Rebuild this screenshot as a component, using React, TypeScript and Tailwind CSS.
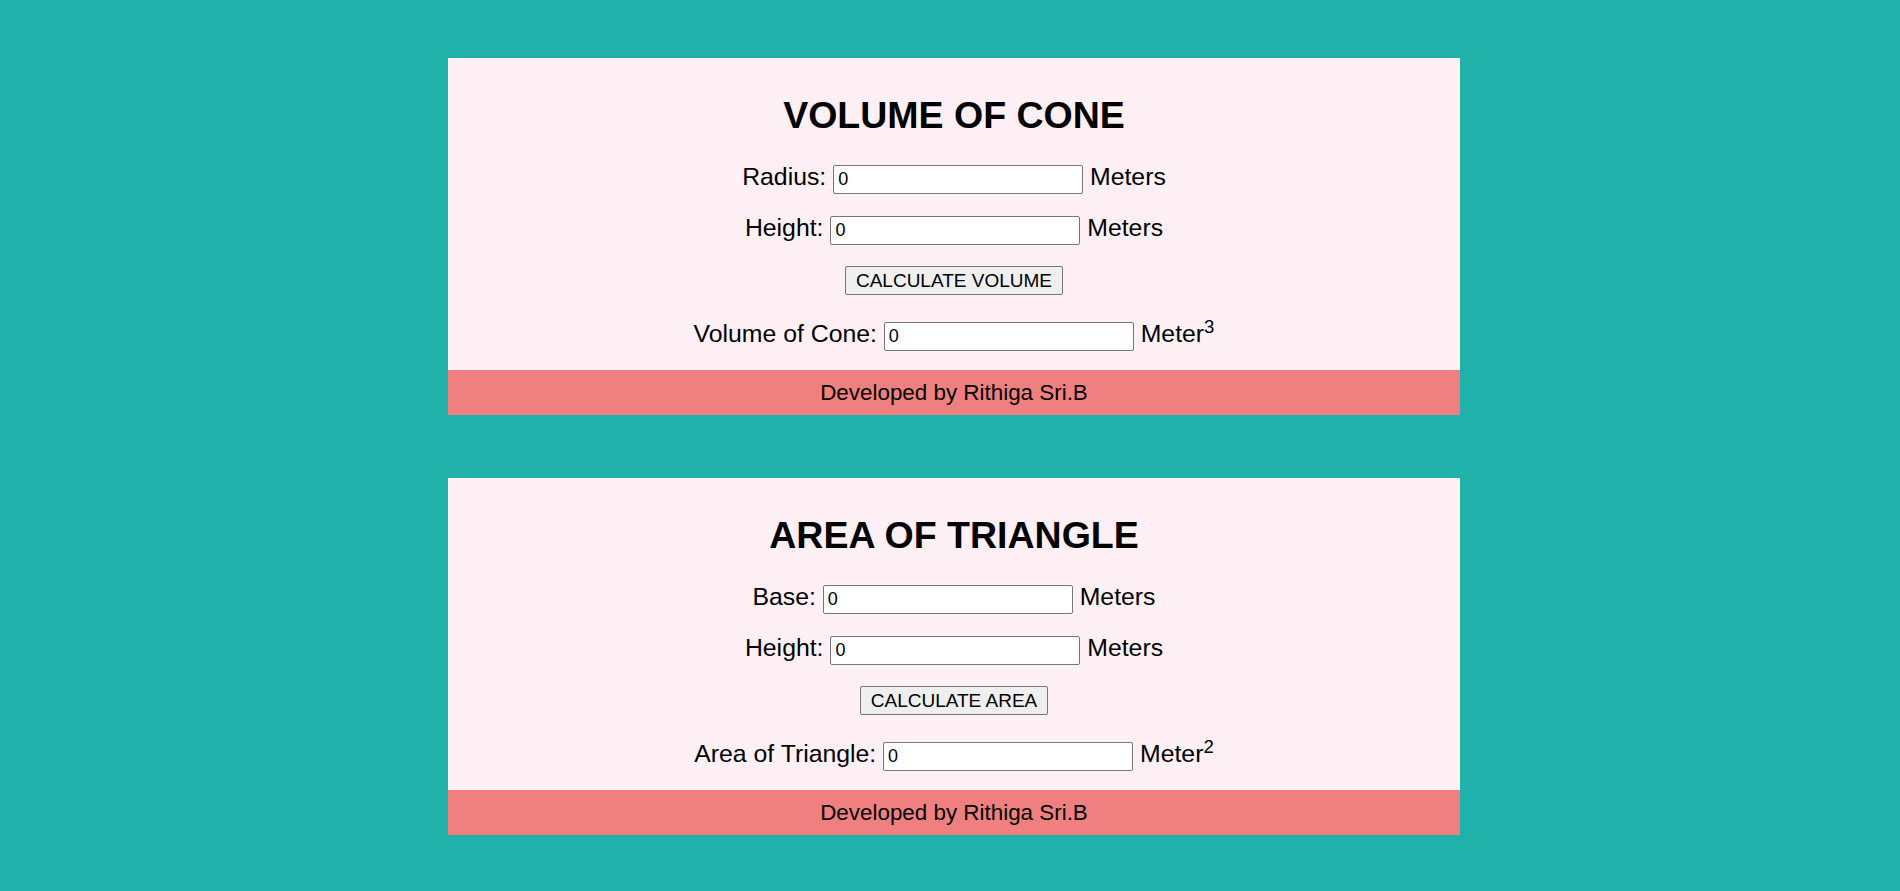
import React from "react";

const font = { fontFamily: '"Liberation Sans", Arial, sans-serif' };

function Row({ label, unit, sup }: { label: string; unit: string; sup?: string }) {
  return (
    <div className="flex items-baseline justify-center gap-[6.9px] text-[24.8px] leading-[20px] text-black">
      <span>{label}</span>
      <input
        type="text"
        defaultValue="0"
        className="h-[29px] w-[250px] rounded-[2px] border border-[#767676] bg-white pl-[4px] text-[18px] leading-[21px] text-black outline-none"
      />
      <span>
        {unit}
        {sup ? <sup>{sup}</sup> : null}
      </span>
    </div>
  );
}

function Card({
  title,
  rows,
  button,
  result,
  sup,
}: {
  title: string;
  rows: string[];
  button: string;
  result: string;
  sup: string;
}) {
  return (
    <div className="w-[1012px] bg-[#fff0f5]" style={font}>
      <div className="flex flex-col items-center pt-[36px] pb-[19px]">
        <h1 className="h-[42px] text-center text-[37.5px] font-bold leading-[42px] text-black">{title}</h1>
        <div className="mt-[29px] flex flex-col items-center">
          <Row label={rows[0]} unit="Meters" />
          <div className="mt-[22px]">
            <Row label={rows[1]} unit="Meters" />
          </div>
          <button className="mt-[21px] h-[29px] rounded-[2px] border border-[#767676] bg-[#efefef] px-[9.5px] text-[19px] leading-[22px] text-black">
            {button}
          </button>
          <div className="mt-[27px]">
            <Row label={result} unit="Meter" sup={sup} />
          </div>
        </div>
      </div>
      <div className="flex h-[45px] items-center justify-center bg-[#f08080] text-[22.4px] text-black">
        Developed by Rithiga Sri.B
      </div>
    </div>
  );
}

export default function App() {
  return (
    <div className="min-h-screen w-full bg-[#20b2aa] pt-[58px] pb-[55px] pl-[8px]">
      <div className="flex flex-col items-center gap-[63px]">
        <Card
          title="VOLUME OF CONE"
          rows={["Radius:", "Height:"]}
          button="CALCULATE VOLUME"
          result="Volume of Cone:"
          sup="3"
        />
        <Card
          title="AREA OF TRIANGLE"
          rows={["Base:", "Height:"]}
          button="CALCULATE AREA"
          result="Area of Triangle:"
          sup="2"
        />
      </div>
    </div>
  );
}
